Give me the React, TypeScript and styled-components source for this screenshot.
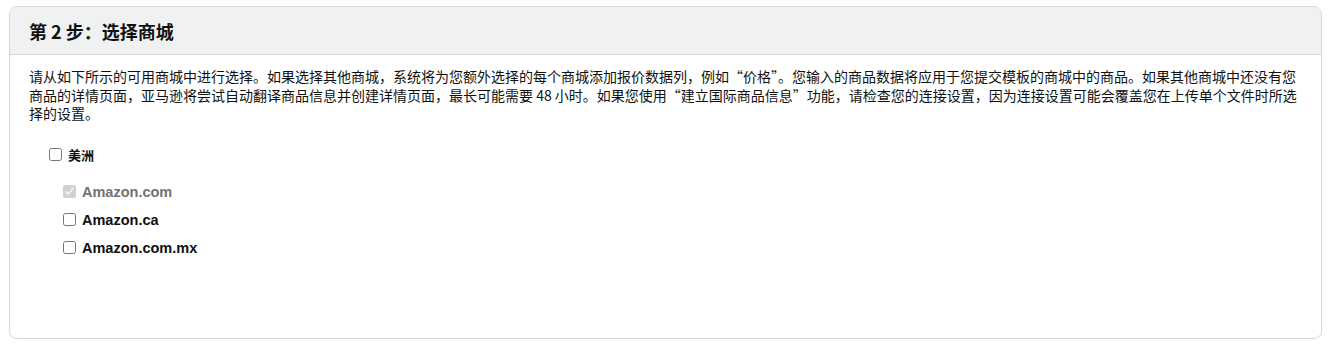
import React from 'react';
import styled, { createGlobalStyle } from 'styled-components';

const GlobalStyle = createGlobalStyle`
  body {
    margin: 0;
    background: #ffffff;
    font-family: "Liberation Sans", "Noto Sans CJK SC", sans-serif;
    color: #0f1111;
  }
`;

const Page = styled.div`
  padding: 6px 6px 7px 9px;
`;

const Card = styled.section`
  border: 1px solid #d5d9d9;
  border-radius: 8px;
  height: 333px;
  box-sizing: border-box;
  overflow: hidden;
`;

const CardHeader = styled.header`
  background: #f0f2f2;
  border-bottom: 1px solid #d5d9d9;
  height: 48px;
  box-sizing: border-box;
  display: flex;
  align-items: center;
  padding: 0 19px;
`;

const Title = styled.h2`
  margin: 0;
  font-family: "Noto Sans CJK SC", sans-serif;
  font-size: 18px;
  font-weight: 700;
  color: #0f1111;
`;

const CardBody = styled.div`
  padding: 12px 20px 0 19px;
`;

const Intro = styled.p`
  margin: 0;
  font-family: "Noto Sans CJK SC", sans-serif;
  font-size: 14px;
  line-height: 18.5px;
`;

const Group = styled.div`
  margin-top: 18px;
  padding-left: 20px;
`;

const Option = styled.label<{ $sub?: boolean; $disabled?: boolean }>`
  display: flex;
  align-items: center;
  gap: 3px;
  height: 28px;
  padding-left: ${(p) => (p.$sub ? '14px' : '0')};
  font-size: ${(p) => (p.$sub ? '14.5px' : '13px')};
  font-weight: 700;
  color: ${(p) => (p.$disabled ? '#6f7373' : '#0f1111')};
`;

const Box = styled.input`
  width: 13px;
  height: 13px;
  margin: 0 3px 0 0;
`;

const SubList = styled.div`
  margin-top: 9px;
`;

const markets = [
  { name: 'Amazon.com', checked: true, disabled: true },
  { name: 'Amazon.ca', checked: false, disabled: false },
  { name: 'Amazon.com.mx', checked: false, disabled: false },
];

export default function App() {
  return (
    <Page>
      <GlobalStyle />
      <Card>
        <CardHeader>
          <Title>第 2 步：选择商城</Title>
        </CardHeader>
        <CardBody>
          <Intro>
            请从如下所示的可用商城中进行选择。如果选择其他商城，系统将为您额外选择的每个商城添加报价数据列，例如“价格”。您输入的商品数据将应用于您提交模板的商城中的商品。如果其他商城中还没有您商品的详情页面，亚马逊将尝试自动翻译商品信息并创建详情页面，最长可能需要 48 小时。如果您使用“建立国际商品信息”功能，请检查您的连接设置，因为连接设置可能会覆盖您在上传单个文件时所选择的设置。
          </Intro>
          <Group>
            <Option>
              <Box type="checkbox" />
              美洲
            </Option>
            <SubList>
              {markets.map((m) => (
                <Option key={m.name} $sub $disabled={m.disabled}>
                  <Box type="checkbox" defaultChecked={m.checked} disabled={m.disabled} />
                  {m.name}
                </Option>
              ))}
            </SubList>
          </Group>
        </CardBody>
      </Card>
    </Page>
  );
}
